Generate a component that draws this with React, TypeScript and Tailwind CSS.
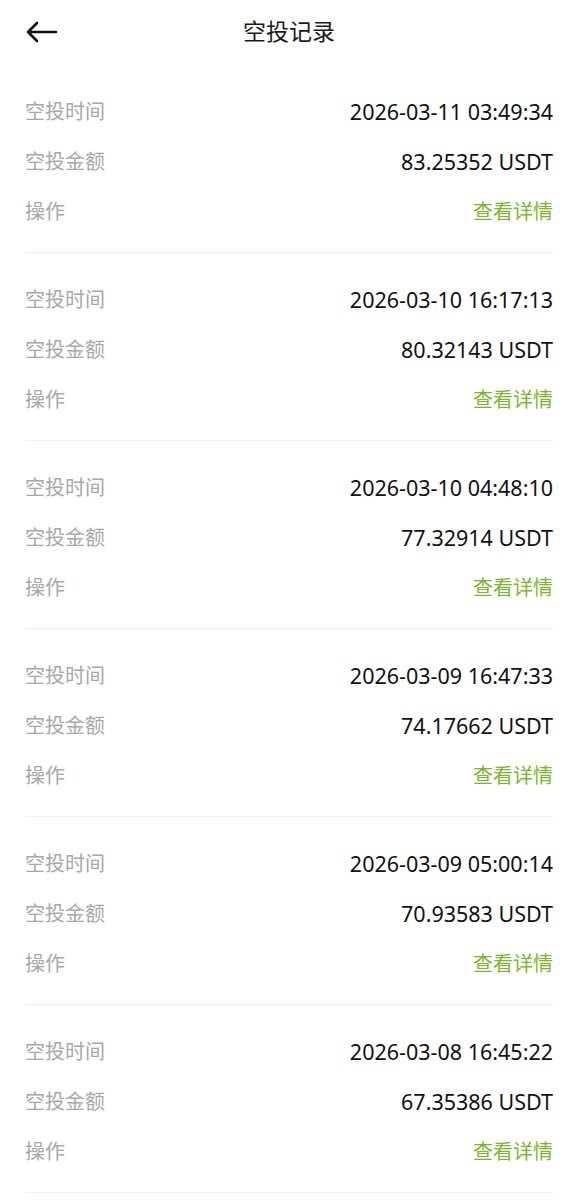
import React from 'react';

interface AirdropRecord {
  time: string;
  amount: string;
}

const records: AirdropRecord[] = [
  { time: '2026-03-11 03:49:34', amount: '83.25352 USDT' },
  { time: '2026-03-10 16:17:13', amount: '80.32143 USDT' },
  { time: '2026-03-10 04:48:10', amount: '77.32914 USDT' },
  { time: '2026-03-09 16:47:33', amount: '74.17662 USDT' },
  { time: '2026-03-09 05:00:14', amount: '70.93583 USDT' },
  { time: '2026-03-08 16:45:22', amount: '67.35386 USDT' },
];

const font = { fontFamily: '"Noto Sans", "Noto Sans CJK SC", sans-serif' };

function Row({ label, children }: { label: string; children: React.ReactNode }) {
  return (
    <div className="flex h-[50px] items-center justify-between">
      <span className="text-[20px] text-[#a8a8a8]">{label}</span>
      {children}
    </div>
  );
}

export default function App() {
  return (
    <div className="min-h-screen bg-white" style={font}>
      {/* 顶部导航 */}
      <div className="relative flex h-[65px] items-center justify-center">
        <button className="absolute left-[25px] top-[20px] p-0">
          <svg width="34" height="24" viewBox="0 0 34 24" fill="none">
            <path d="M31 12H3M12 3L3 12l9 9" stroke="#111" strokeWidth="2.6" strokeLinecap="round" strokeLinejoin="round" />
          </svg>
        </button>
        <h1 className="text-[23px] text-[#1a1a1a] -mt-[2px]">空投记录</h1>
      </div>

      {/* 记录列表 */}
      <div className="px-[25px]">
        {records.map(r => (
          <div key={r.time} className="pt-[22px] pb-[15px] border-b border-[#f0f0f0]">
            <Row label="空投时间">
              <span className="text-[21.5px] text-[#111]">{r.time}</span>
            </Row>
            <Row label="空投金额">
              <span className="text-[21.5px] text-[#111]">{r.amount}</span>
            </Row>
            <Row label="操作">
              <span className="text-[20px] text-[#7cb52e]">查看详情</span>
            </Row>
          </div>
        ))}
      </div>
    </div>
  );
}
